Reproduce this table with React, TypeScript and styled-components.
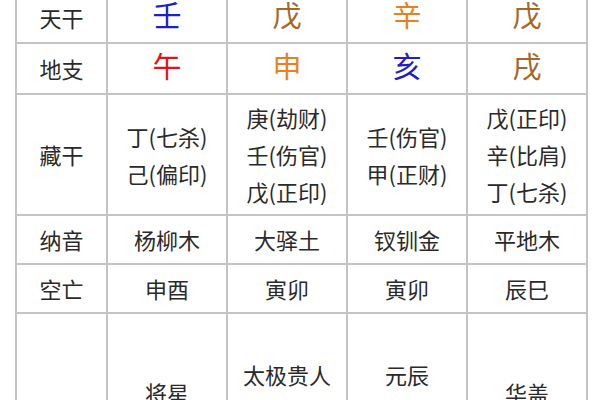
import styled, { createGlobalStyle } from 'styled-components';

const GlobalStyle = createGlobalStyle`
  html, body {
    margin: 0;
    padding: 0;
    background: #ffffff;
    overflow: hidden;
  }
  body {
    font-family: "Noto Sans CJK SC", "Noto Sans", sans-serif;
    color: #2a2a2a;
  }
`;

const Page = styled.div`
  width: 600px;
  height: 400px;
  overflow: hidden;
  padding-left: 15px;
  box-sizing: border-box;
`;

const Table = styled.table`
  margin-top: -9px;
  border-collapse: collapse;
  table-layout: fixed;
`;

const Row = styled.tr<{ $h: number }>`
  height: ${(p) => p.$h}px;
`;

const Cell = styled.td<{ $w?: number }>`
  width: ${(p) => (p.$w ? `${p.$w}px` : 'auto')};
  border: 2px solid #c4c4c4;
  padding: 0;
  text-align: center;
  vertical-align: middle;
  font-size: 22px;
  line-height: 37px;
  color: #2a2a2a;
`;

const Pillar = styled.span<{ $color: string }>`
  display: inline-block;
  font-size: 29px;
  line-height: 30px;
  color: ${(p) => p.$color};
`;

const Line = styled.div`
  white-space: nowrap;
`;

const BLUE = '#1e1ec8';
const BROWN = '#a5662c';
const ORANGE = '#e8801e';
const RED = '#e01414';

const stems = [
  { t: '壬', c: BLUE },
  { t: '戊', c: BROWN },
  { t: '辛', c: ORANGE },
  { t: '戊', c: BROWN },
];

const branches = [
  { t: '午', c: RED },
  { t: '申', c: ORANGE },
  { t: '亥', c: BLUE },
  { t: '戌', c: BROWN },
];

const hidden = [
  ['丁(七杀)', '己(偏印)'],
  ['庚(劫财)', '壬(伤官)', '戊(正印)'],
  ['壬(伤官)', '甲(正财)'],
  ['戊(正印)', '辛(比肩)', '丁(七杀)'],
];

const nayin = ['杨柳木', '大驿土', '钗钏金', '平地木'];
const kongwang = ['申酉', '寅卯', '寅卯', '辰巳'];

const shensha = [
  ['将星', '天德贵人'],
  ['太极贵人', '天乙贵人', '文昌贵人'],
  ['元辰', '劫煞', '亡神'],
  ['华盖', '月德贵人'],
];

function App() {
  return (
    <Page>
      <GlobalStyle />
      <Table>
        <tbody>
          <Row $h={51}>
            <Cell $w={89}>天干</Cell>
            {stems.map((s, i) => (
              <Cell key={i} $w={118}>
                <Pillar $color={s.c}>{s.t}</Pillar>
              </Cell>
            ))}
          </Row>
          <Row $h={51}>
            <Cell>地支</Cell>
            {branches.map((s, i) => (
              <Cell key={i}>
                <Pillar $color={s.c}>{s.t}</Pillar>
              </Cell>
            ))}
          </Row>
          <Row $h={121}>
            <Cell>藏干</Cell>
            {hidden.map((lines, i) => (
              <Cell key={i}>
                {lines.map((l) => (
                  <Line key={l}>{l}</Line>
                ))}
              </Cell>
            ))}
          </Row>
          <Row $h={49}>
            <Cell>纳音</Cell>
            {nayin.map((n, i) => (
              <Cell key={i}>{n}</Cell>
            ))}
          </Row>
          <Row $h={49}>
            <Cell>空亡</Cell>
            {kongwang.map((n, i) => (
              <Cell key={i}>{n}</Cell>
            ))}
          </Row>
          <Row $h={196}>
            <Cell>神煞</Cell>
            {shensha.map((lines, i) => (
              <Cell key={i}>
                {lines.map((l) => (
                  <Line key={l}>{l}</Line>
                ))}
              </Cell>
            ))}
          </Row>
        </tbody>
      </Table>
    </Page>
  );
}

export default App;
